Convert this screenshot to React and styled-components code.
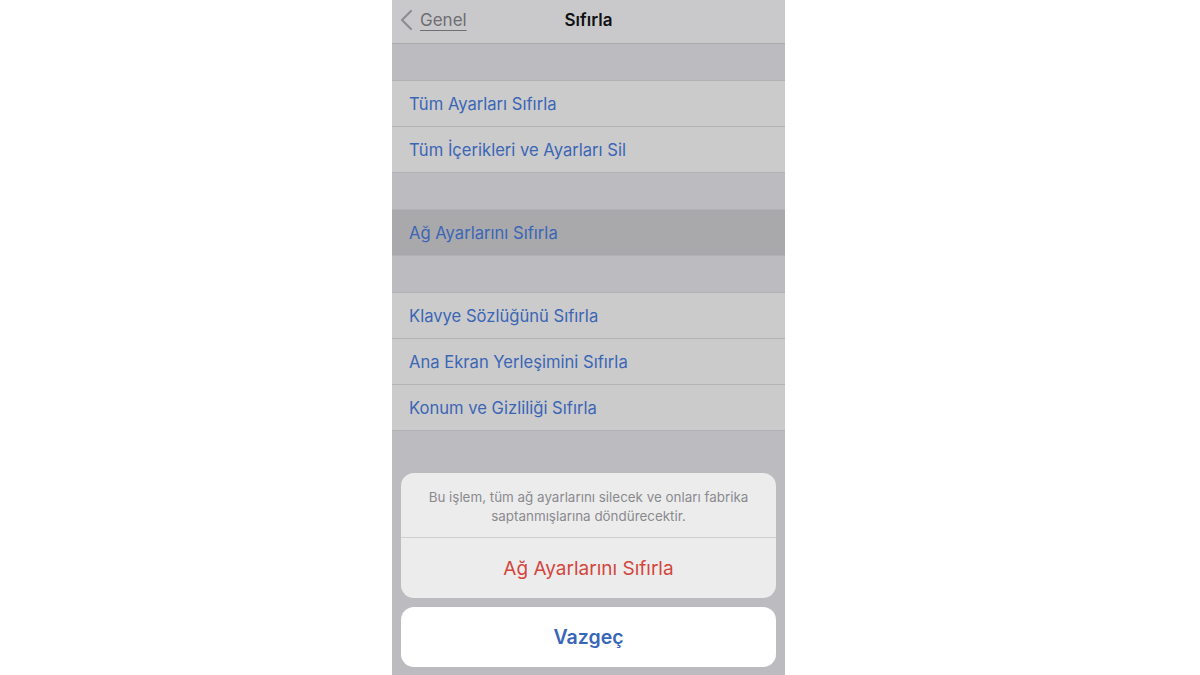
import React from "react"
import styled, { createGlobalStyle } from "styled-components"

const Global = createGlobalStyle`
  html, body { margin: 0; padding: 0; background: #ffffff; }
  body { font-family: Inter, "Liberation Sans", sans-serif; }
`

const Page = styled.div`
  width: 1200px;
  height: 675px;
  display: flex;
  padding-left: 392px;
  box-sizing: border-box;
  overflow: hidden;
`

const Screen = styled.div`
  position: relative;
  width: 393px;
  height: 675px;
  background: #bcbcc0;
  display: flex;
  flex-direction: column;
  overflow: hidden;
`

const NavBar = styled.div`
  height: 44px;
  flex-shrink: 0;
  box-sizing: border-box;
  padding-bottom: 3px;
  background: #c9c9cb;
  border-bottom: 1px solid #a9a9ad;
  display: flex;
  align-items: center;
  justify-content: center;
  position: relative;
`

const Back = styled.div`
  position: absolute;
  left: 8px;
  top: 0;
  height: 40px;
  display: flex;
  align-items: center;
  gap: 7px;
  color: #6e6e73;
  font-size: 17px;
`

const BackLabel = styled.span`
  text-decoration: underline;
  text-underline-offset: 4px;
  text-decoration-thickness: 1px;
`

const Title = styled.div`
  font-size: 17px;
  font-weight: 600;
  color: #111113;
`

const Gap = styled.div`
  height: ${p => p.h}px;
  flex-shrink: 0;
`

const Group = styled.div`
  border-top: 1px solid #b2b2b6;
  border-bottom: 1px solid #b2b2b6;
  background: #cbcbcc;
`

const Row = styled.div`
  height: 45px;
  display: flex;
  align-items: center;
  padding-left: 17px;
  box-sizing: border-box;
  background: ${p => (p.active ? "#a9a9ac" : "transparent")};
  color: #3b66b5;
  font-size: 16.6px;
  & + & {
    border-top: 1px solid #b4b4b7;
    height: 46px;
  }
`

const Overlay = styled.div`
  position: absolute;
  left: 9px;
  right: 9px;
  bottom: 8px;
  display: flex;
  flex-direction: column;
  gap: 9px;
`

const Sheet = styled.div`
  background: #ececec;
  border-radius: 13px;
  overflow: hidden;
`

const Message = styled.div`
  height: 65px;
  display: flex;
  align-items: center;
  justify-content: center;
  text-align: center;
  color: #8a8a8e;
  font-size: 13.4px;
  line-height: 19px;
  padding: 4px 22px 0;
  border-bottom: 1px solid #cfcfd1;
  box-sizing: border-box;
`

const Action = styled.div`
  height: 60px;
  display: flex;
  align-items: center;
  justify-content: center;
  font-size: ${p => (p.bold ? 19.5 : 19)}px;
  font-weight: ${p => (p.bold ? 600 : 400)};
  color: ${p => p.color};
  background: ${p => p.bg || "transparent"};
  border-radius: ${p => (p.rounded ? "13px" : "0")};
`

export default function App() {
  return (
    <Page>
      <Global />
      <Screen>
        <NavBar>
          <Back>
            <svg width="13" height="22" viewBox="0 0 13 22">
              <path d="M11 2 L2 11 L11 20" fill="none" stroke="#8e8e92" strokeWidth="2.2" strokeLinecap="round" strokeLinejoin="round" />
            </svg>
            <BackLabel>Genel</BackLabel>
          </Back>
          <Title>Sıfırla</Title>
        </NavBar>
        <Gap h={36} />
        <Group>
          <Row>Tüm Ayarları Sıfırla</Row>
          <Row>Tüm İçerikleri ve Ayarları Sil</Row>
        </Group>
        <Gap h={36} />
        <Group>
          <Row active>Ağ Ayarlarını Sıfırla</Row>
        </Group>
        <Gap h={36} />
        <Group>
          <Row>Klavye Sözlüğünü Sıfırla</Row>
          <Row>Ana Ekran Yerleşimini Sıfırla</Row>
          <Row>Konum ve Gizliliği Sıfırla</Row>
        </Group>
        <Overlay>
          <Sheet>
            <Message>
              Bu işlem, tüm ağ ayarlarını silecek ve onları fabrika saptanmışlarına döndürecektir.
            </Message>
            <Action color="#d4463c">Ağ Ayarlarını Sıfırla</Action>
          </Sheet>
          <Action bold rounded bg="#ffffff" color="#3a66b8">Vazgeç</Action>
        </Overlay>
      </Screen>
    </Page>
  )
}
